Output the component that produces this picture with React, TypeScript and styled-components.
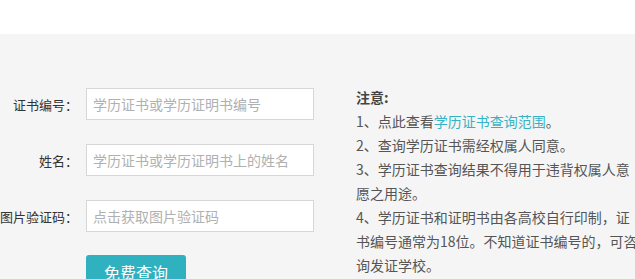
import styled, { createGlobalStyle } from 'styled-components';

const GlobalStyle = createGlobalStyle`
  body {
    margin: 0;
    font-family: "Noto Sans CJK SC", "Liberation Sans", sans-serif;
    background: #ffffff;
  }
`;

const Header = styled.div`
  height: 34px;
  background: #ffffff;
`;

const Main = styled.div`
  background: #f5f5f5;
  padding-top: 51px;
  min-height: 300px;
  display: flex;
  align-items: flex-start;
`;

const Form = styled.div`
  margin-top: 3px;
  width: 314px;
  display: flex;
  flex-direction: column;
  gap: 24px;
`;

const Row = styled.div`
  display: flex;
  align-items: center;
  gap: 8px;
`;

const Label = styled.label`
  width: 78px;
  text-align: right;
  font-size: 13px;
  color: #333;
  white-space: nowrap;
`;

const Input = styled.input`
  box-sizing: border-box;
  width: 228px;
  height: 32px;
  border: 1px solid #d6d6d6;
  background: #fff;
  padding: 0 6px;
  font-family: inherit;
  font-size: 14px;
  color: #333;
  outline: none;

  &::placeholder {
    color: #b0b0b0;
  }
`;

const Submit = styled.button`
  margin: -1px 0 0 86px;
  width: 100px;
  height: 34px;
  border: none;
  border-radius: 3px;
  background: #2fb1c0;
  color: #fff;
  font-family: inherit;
  font-size: 16px;
  line-height: 34px;
  padding: 0;
`;

const Divider = styled.div`
  margin: 3px 0 0 24px;
  width: 1px;
  height: 240px;
  background: #e6e6e6;
`;

const Notes = styled.div`
  margin-left: 18px;
  width: 285px;
  flex-shrink: 0;
  font-size: 14px;
  line-height: 24px;
  color: #555;
`;

const NoteTitle = styled.div`
  font-weight: bold;
  color: #444;
`;

const Link = styled.a`
  color: #35b2c4;
  text-decoration: none;
`;

export default function App() {
  return (
    <>
      <GlobalStyle />
      <Header />
      <Main>
        <Form>
          <Row>
            <Label>证书编号：</Label>
            <Input placeholder="学历证书或学历证明书编号" />
          </Row>
          <Row>
            <Label>姓名：</Label>
            <Input placeholder="学历证书或学历证明书上的姓名" />
          </Row>
          <Row>
            <Label>图片验证码：</Label>
            <Input placeholder="点击获取图片验证码" />
          </Row>
          <Submit>免费查询</Submit>
        </Form>
        <Divider />
        <Notes>
          <NoteTitle>注意:</NoteTitle>
          <div>
            1、点此查看<Link href="#">学历证书查询范围</Link>。
          </div>
          <div>2、查询学历证书需经权属人同意。</div>
          <div>3、学历证书查询结果不得用于违背权属人意愿之用途。</div>
          <div>4、学历证书和证明书由各高校自行印制，证书编号通常为18位。不知道证书编号的，可咨询发证学校。</div>
        </Notes>
      </Main>
    </>
  );
}
